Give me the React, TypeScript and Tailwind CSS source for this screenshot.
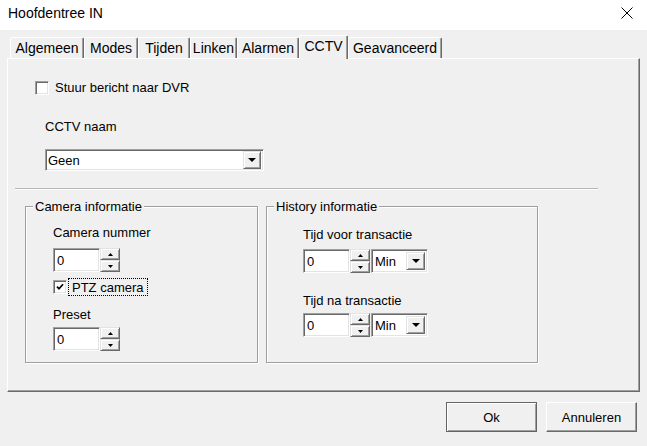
import React from "react";

const sunken =
  "border border-t-[#a0a0a0] border-l-[#a0a0a0] border-r-white border-b-white shadow-[inset_1px_1px_0_#696969,inset_-1px_-1px_0_#e3e3e3]";
const raised =
  "bg-[#f0f0f0] border border-t-[#e3e3e3] border-l-[#e3e3e3] border-r-[#696969] border-b-[#696969] shadow-[inset_1px_1px_0_#ffffff,inset_-1px_-1px_0_#a0a0a0]";

const TABS: { label: string; w: string; active?: boolean }[] = [
  { label: "Algemeen", w: "w-[74px]" },
  { label: "Modes", w: "w-[54px]" },
  { label: "Tijden", w: "w-[52px]" },
  { label: "Linken", w: "w-[47px]" },
  { label: "Alarmen", w: "w-[62px]" },
  { label: "CCTV", w: "w-[49px]", active: true },
  { label: "Geavanceerd", w: "w-[94px]" },
];

function Tri({ up, big }: { up?: boolean; big?: boolean }) {
  if (big) {
    return (
      <svg width="8" height="4" viewBox="0 0 8 4">
        <path d="M0 0 L8 0 L4 4 Z" fill="#000" />
      </svg>
    );
  }
  return (
    <svg width="5" height="3" viewBox="0 0 5 3">
      <path d={up ? "M0 3 L5 3 L2.5 0 Z" : "M0 0 L5 0 L2.5 3 Z"} fill="#000" />
    </svg>
  );
}

function Check({ checked }: { checked?: boolean }) {
  return (
    <div className={`w-[14px] h-[14px] shrink-0 bg-white flex items-center justify-center ${sunken}`}>
      {checked && (
        <svg width="8" height="8" viewBox="0 0 8 8">
          <path d="M1 3.6 L3 5.8 L7 1.2" stroke="#000" strokeWidth="1.7" fill="none" />
        </svg>
      )}
    </div>
  );
}

function Spin() {
  return (
    <div className="flex">
      <div className={`w-[47px] h-[24px] bg-white pl-[3px] flex items-center ${sunken}`}>0</div>
      <div className="w-[20px] h-[24px] flex flex-col">
        <div className={`flex-1 flex items-center justify-center ${raised}`}>
          <Tri up />
        </div>
        <div className={`flex-1 flex items-center justify-center ${raised}`}>
          <Tri />
        </div>
      </div>
    </div>
  );
}

function UnitCombo() {
  return (
    <div className={`ml-[1px] w-[57px] h-[24px] bg-white flex items-center justify-between pl-[3px] pr-[2px] ${sunken}`}>
      <span>Min</span>
      <div className={`w-[19px] h-[18px] flex items-center justify-center ${raised}`}>
        <Tri big />
      </div>
    </div>
  );
}

function Group({ title, w, children }: { title: string; w: string; children: React.ReactNode }) {
  return (
    <div className={`${w} h-[157px] border border-[#a0a0a0] shadow-[inset_1px_1px_0_#ffffff,1px_1px_0_#ffffff] flex flex-col`}>
      <span className="-mt-[8px] ml-[7px] w-fit px-[2px] bg-[#f0f0f0]">{title}</span>
      {children}
    </div>
  );
}

function DlgButton({ children, isDefault }: { children: React.ReactNode; isDefault?: boolean }) {
  return (
    <button
      className={`w-[91px] h-[30px] bg-[#f0f0f0] flex items-center justify-center ${
        isDefault
          ? "border border-[#646464] shadow-[inset_1px_1px_0_#ffffff,inset_-1px_-1px_0_#a0a0a0]"
          : "border border-t-white border-l-white border-r-[#696969] border-b-[#696969] shadow-[inset_-1px_-1px_0_#a0a0a0]"
      }`}
    >
      {children}
    </button>
  );
}

export default function App() {
  return (
    <div className="w-[647px] h-[446px] bg-[#f0f0f0] flex flex-col overflow-hidden font-['Liberation_Sans',Arial,sans-serif] text-[13px] leading-[15px] text-black">
      {/* Title bar */}
      <div className="h-[30px] shrink-0 bg-white flex items-center justify-between pl-[8px] pr-[14px] pb-[4px]">
        <span className="text-[14px] leading-[17px]">Hoofdentree IN</span>
        <svg width="12" height="12" viewBox="0 0 12 12">
          <path d="M0.5 0.5 L11.5 11.5 M11.5 0.5 L0.5 11.5" stroke="#000" strokeWidth="1" />
        </svg>
      </div>

      <div className="flex-1 flex flex-col px-[7px] pt-[5px]">
        {/* Tab strip */}
        <div className="h-[23px] flex items-end pl-[3px] text-[14px] leading-[16px]">
          {TABS.map((t) =>
            t.active ? (
              <div
                key={t.label}
                className={`${t.w} h-[24px] -mb-px relative z-10 bg-[#f0f0f0] rounded-t-[2px] border-t border-l border-t-white border-l-white border-r border-r-[#696969] shadow-[inset_-1px_0_0_#a0a0a0] flex justify-center pt-[2px]`}
              >
                {t.label}
              </div>
            ) : (
              <div
                key={t.label}
                className={`${t.w} h-[21px] bg-[#f0f0f0] rounded-t-[2px] border-t border-l border-t-white border-l-white border-r border-r-[#696969] shadow-[inset_-1px_0_0_#a0a0a0] flex justify-center pt-[2px]`}
              >
                {t.label}
              </div>
            )
          )}
        </div>

        {/* Tab panel */}
        <div className="h-[334px] border border-t-white border-l-white border-r-[#696969] border-b-[#696969] shadow-[inset_-1px_-1px_0_#a0a0a0] flex flex-col pl-[27px] pt-[21px]">
          <div className="flex items-center gap-[6px]">
            <Check />
            <span>Stuur bericht naar DVR</span>
          </div>

          <div className="ml-[10px] mt-[24px]">CCTV naam</div>

          <div className={`ml-[10px] mt-[15px] w-[219px] h-[22px] bg-white flex items-center justify-between pl-[2px] pr-[2px] ${sunken}`}>
            <span>Geen</span>
            <div className={`w-[18px] h-[18px] flex items-center justify-center ${raised}`}>
              <Tri big />
            </div>
          </div>

          <div className="-ml-[20px] mt-[17px] w-[583px] border-t border-t-[#b8b8b8] border-b border-b-white" />

          <div className="-ml-[10px] mt-[16px] flex gap-[8px]">
            <Group title="Camera informatie" w="w-[233px]">
              <div className="flex flex-col pl-[27px]">
                <div className="mt-[11px]">Camera nummer</div>
                <div className="mt-[8px]">
                  <Spin />
                </div>
                <div className="mt-[6px] h-[18px] flex items-center gap-[1px]">
                  <Check checked />
                  <span className="h-[18px] px-[3px] flex items-center border border-dotted border-black">PTZ camera</span>
                </div>
                <div className="mt-[11px]">Preset</div>
                <div className="mt-[5px]">
                  <Spin />
                </div>
              </div>
            </Group>

            <Group title="History informatie" w="w-[272px]">
              <div className="flex flex-col pl-[36px]">
                <div className="mt-[13px]">Tijd voor transactie</div>
                <div className="mt-[7px] flex">
                  <Spin />
                  <UnitCombo />
                </div>
                <div className="mt-[20px]">Tijd na transactie</div>
                <div className="mt-[5px] flex">
                  <Spin />
                  <UnitCombo />
                </div>
              </div>
            </Group>
          </div>
        </div>

        {/* Buttons */}
        <div className="mt-[10px] pr-[3px] flex justify-end gap-[9px]">
          <DlgButton isDefault>Ok</DlgButton>
          <DlgButton>Annuleren</DlgButton>
        </div>
      </div>
    </div>
  );
}
